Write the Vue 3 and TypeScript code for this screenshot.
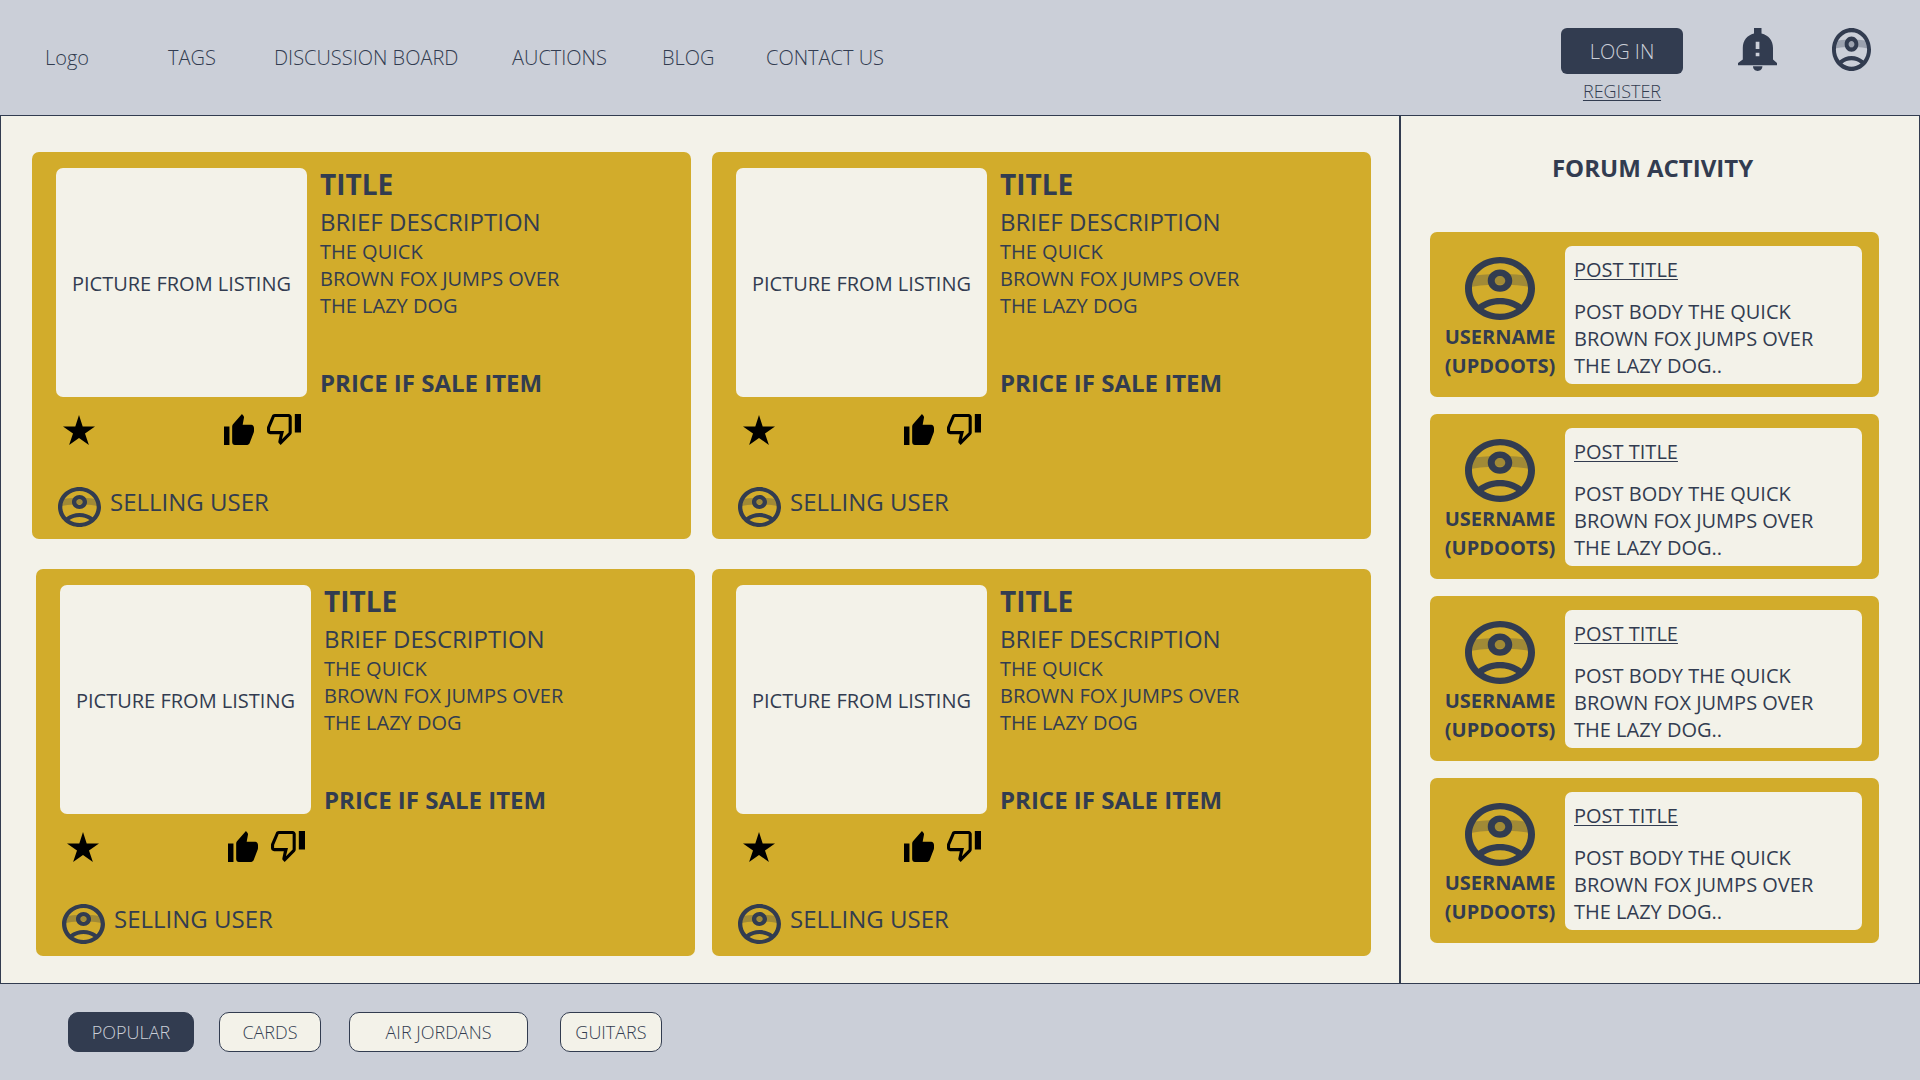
<script setup lang="ts">
import { defineComponent, h, ref } from 'vue'

interface NavItem { label: string; href: string }
interface Listing {
  id: number
  title: string
  summary: string
  lines: string[]
  price: string
  seller: string
}
interface Post { id: number; title: string; lines: string[]; user: string; votes: string }
interface Tag { label: string; size: string }

const AvatarIcon = defineComponent({
  render() {
    return h('svg', { viewBox: '2 2 20 20', preserveAspectRatio: 'none', 'aria-hidden': 'true' }, [
      h('path', {
        d: 'M3.6 8.1Q7.6 7.5 9 7.5h6Q16.4 7.5 20.4 8.1L21 11.6Q17.5 10.9 14.5 10.8h-5Q6.5 10.9 3 11.6Z',
        fill: 'currentColor',
        opacity: '0.3',
      }),
      h('path', {
        d: 'M12 2C6.48 2 2 6.48 2 12s4.48 10 10 10 10-4.48 10-10S17.52 2 12 2zM7.35 18.5C8.66 17.56 10.26 17 12 17s3.34.56 4.65 1.5c-1.31.94-2.91 1.5-4.65 1.5s-3.34-.56-4.65-1.5zm10.79-1.38C16.45 15.8 14.32 15 12 15s-4.45.8-6.14 2.12C4.7 15.73 4 13.95 4 12c0-4.42 3.58-8 8-8s8 3.58 8 8c0 1.95-.7 3.73-1.86 5.12zM12 6c-1.93 0-3.5 1.57-3.5 3.5S10.07 13 12 13s3.5-1.57 3.5-3.5S13.93 6 12 6zm0 5c-.83 0-1.5-.67-1.5-1.5S11.17 8 12 8s1.5.67 1.5 1.5S12.83 11 12 11z',
        fill: 'currentColor',
      }),
    ])
  },
})

const navItems: NavItem[] = [
  { label: 'TAGS', href: '#tags' },
  { label: 'DISCUSSION BOARD', href: '#board' },
  { label: 'AUCTIONS', href: '#auctions' },
  { label: 'BLOG', href: '#blog' },
  { label: 'CONTACT US', href: '#contact' },
]

const makeListing = (id: number): Listing => ({
  id,
  title: 'TITLE',
  summary: 'BRIEF DESCRIPTION',
  lines: ['THE QUICK', 'BROWN FOX JUMPS OVER', 'THE LAZY DOG'],
  price: 'PRICE IF SALE ITEM',
  seller: 'SELLING USER',
})

const listingRows: Listing[][] = [
  [makeListing(1), makeListing(2)],
  [makeListing(3), makeListing(4)],
]

const posts: Post[] = [1, 2, 3, 4].map((id) => ({
  id,
  title: 'POST TITLE',
  lines: ['POST BODY THE QUICK', 'BROWN FOX JUMPS OVER', 'THE LAZY DOG..'],
  user: 'USERNAME',
  votes: '(UPDOOTS)',
}))

const tags: Tag[] = [
  { label: 'POPULAR', size: 'medium' },
  { label: 'CARDS', size: 'small' },
  { label: 'AIR JORDANS', size: 'large' },
  { label: 'GUITARS', size: 'small' },
]
const activeTag = ref<string>('POPULAR')
</script>

<template>
  <div class="page">
    <header class="top">
      <a class="logo" href="#home">Logo</a>
      <nav class="nav" aria-label="Main">
        <a v-for="item in navItems" :key="item.label" :href="item.href">{{ item.label }}</a>
      </nav>
      <div class="actions">
        <div class="account">
          <button type="button" class="login">LOG IN</button>
          <a class="register" href="#register">REGISTER</a>
        </div>
        <button type="button" class="icon-button" aria-label="Notifications">
          <svg class="bell" viewBox="0 0 39 43" aria-hidden="true">
            <path
              fill="currentColor"
              fill-rule="evenodd"
              d="M16 0h7.5v5.600C30.5 7.3 35 12.5 35 20v11.5l4 3.5v2.3H0V35l4.8-3.5V20C4.8 12.5 9.2 7.3 16 5.6ZM17.7 13.7v7.3h3.7v-7.3ZM17.7 24.7v3.6h3.7v-3.6ZM15 38.3h9.4c0 2.600-2 4.7-4.7 4.7S15 40.9 15 38.3Z"
            />
          </svg>
        </button>
        <button type="button" class="icon-button" aria-label="Profile">
          <AvatarIcon class="avatar-top" />
        </button>
      </div>
    </header>

    <div class="content">
      <main class="listings">
        <div v-for="(row, r) in listingRows" :key="r" class="row">
          <article v-for="item in row" :key="item.id" class="card">
            <div class="card-main">
              <div class="picture">PICTURE FROM LISTING</div>
              <div class="details">
                <h2>{{ item.title }}</h2>
                <h3>{{ item.summary }}</h3>
                <p>
                  <span v-for="line in item.lines" :key="line">{{ line }}</span>
                </p>
                <strong>{{ item.price }}</strong>
              </div>
            </div>
            <div class="reactions">
              <button type="button" class="icon-button" aria-label="Favourite">
                <svg class="star" viewBox="0 0 32 30" aria-hidden="true">
                  <path d="M16 0l3.7 11.4H32l-10 7.1L25.9 30 16 23 6.1 30 10 18.5 0 11.4h12.3Z" />
                </svg>
              </button>
              <div class="votes">
                <button type="button" class="icon-button" aria-label="Like">
                  <svg class="up" viewBox="1 1 22 20" preserveAspectRatio="none" aria-hidden="true">
                    <path d="M1 21h4V9H1v12zm22-11c0-1.1-.9-2-2-2h-6.31l.95-4.57.03-.32c0-.41-.17-.79-.44-1.06L14.17 1 7.59 7.59C7.22 7.95 7 8.45 7 9v10c0 1.1.9 2 2 2h9c.83 0 1.54-.5 1.84-1.22l3.02-7.05c.09-.23.14-.47.14-.73v-2z" />
                  </svg>
                </button>
                <button type="button" class="icon-button" aria-label="Dislike">
                  <svg class="down" viewBox="1 3 22 20" preserveAspectRatio="none" aria-hidden="true">
                    <path d="M15 3H6c-.83 0-1.54.5-1.84 1.22l-3.02 7.05c-.09.23-.14.47-.14.73v2c0 1.1.9 2 2 2h6.31l-.95 4.57-.03.32c0 .41.17.79.44 1.06L9.83 23l6.58-6.59c.37-.36.59-.86.59-1.41V5c0-1.1-.9-2-2-2zm0 12l-4.34 4.34L12 14H3v-2l3-7h9v10zm4-12h4v12h-4V3z" />
                  </svg>
                </button>
              </div>
            </div>
            <div class="seller">
              <AvatarIcon class="avatar-seller" />
              <span>{{ item.seller }}</span>
            </div>
          </article>
        </div>
      </main>

      <aside class="forum">
        <h2 class="forum-heading">FORUM ACTIVITY</h2>
        <article v-for="post in posts" :key="post.id" class="post">
          <div class="author">
            <AvatarIcon class="avatar-post" />
            <span>{{ post.user }}</span>
            <span>{{ post.votes }}</span>
          </div>
          <div class="post-body">
            <a href="#post">{{ post.title }}</a>
            <p>
              <span v-for="line in post.lines" :key="line">{{ line }}</span>
            </p>
          </div>
        </article>
      </aside>
    </div>

    <footer class="tags">
      <button
        v-for="tag in tags"
        :key="tag.label"
        type="button"
        class="tag"
        :class="[tag.size, { active: tag.label === activeTag }]"
        @click="activeTag = tag.label"
      >
        {{ tag.label }}
      </button>
    </footer>
  </div>
</template>

<style>
body {
  margin: 0;
  background: #cbcfd8;
}
</style>

<style scoped>
.page {
  display: flex;
  flex-direction: column;
  min-height: 100vh;
  background: #cbcfd8;
  color: #323c50;
  font-family: "Open Sans", "Noto Sans", sans-serif;
  font-size: 20px;
  font-weight: 500;
  line-height: 27px;
}
h2,
h3,
p {
  margin: 0;
}
a {
  color: inherit;
  text-decoration: none;
}
button {
  font: inherit;
  color: inherit;
  cursor: pointer;
}
svg {
  display: block;
}
p span {
  display: block;
}
.icon-button {
  padding: 0;
  border: 0;
  background: none;
}

.top {
  display: flex;
  height: 115px;
  padding: 0 49px 0 45px;
  font-weight: 300;
}
.logo {
  width: 123px;
  align-self: center;
}
.nav {
  display: grid;
  grid-template-columns: 106px 238px 150px 104px auto;
  align-items: center;
  white-space: nowrap;
}
.actions {
  display: flex;
  align-items: flex-start;
  margin-left: auto;
  padding-top: 28px;
  gap: 55px;
}
.account {
  display: flex;
  flex-direction: column;
  align-items: center;
  gap: 5px;
}
.login {
  width: 122px;
  height: 46px;
  padding: 0;
  border: 0;
  border-radius: 6px;
  background: #323c50;
  color: #cbcfd8;
}
.register {
  font-size: 18px;
  line-height: 24px;
  text-decoration: underline;
  text-decoration-thickness: 1px;
  text-underline-offset: 2px;
}
.bell {
  width: 39px;
  height: 43px;
}
.avatar-top {
  width: 39px;
  height: 43px;
}

.content {
  display: grid;
  flex: 1;
  grid-template-columns: 1400fr 520fr;
}
.listings,
.forum {
  border: 1px solid #323c50;
  background: #f3f2e9;
}
.listings {
  display: flex;
  flex-direction: column;
  padding: 36px 28px 27px 31px;
  gap: 30px;
}
.row {
  display: grid;
  grid-template-columns: 1fr 1fr;
  gap: 21px;
}
.row:nth-child(even) {
  padding-left: 4px;
  gap: 17px;
}
.card {
  padding: 16px 24px 12px;
  border-radius: 7px;
  background: #d2ac2b;
}
.card-main {
  display: flex;
  gap: 13px;
}
.picture {
  display: flex;
  box-sizing: border-box;
  flex: none;
  align-items: center;
  justify-content: center;
  width: 251px;
  height: 229px;
  padding-top: 2px;
  border-radius: 7px;
  background: #f3f2e9;
  white-space: nowrap;
}
.details {
  display: flex;
  flex-direction: column;
}
.details h2 {
  font-size: 28px;
  font-weight: 700;
  line-height: 32px;
}
.details h3 {
  margin-top: 6px;
  font-size: 24px;
  font-weight: 500;
  line-height: 32px;
}
.details strong {
  margin-top: auto;
  font-size: 24px;
  font-weight: 700;
  line-height: 28px;
}
.reactions {
  display: flex;
  justify-content: space-between;
  align-items: flex-end;
  width: 238px;
  height: 31px;
  padding: 17px 6px 1px 7px;
  color: #000;
}
.votes {
  display: flex;
  gap: 13px;
}
.star {
  width: 32px;
  height: 30px;
}
.up {
  width: 30px;
  height: 31px;
}
.down {
  width: 34px;
  height: 31px;
}
.seller {
  display: flex;
  align-items: flex-start;
  margin-top: 41px;
  padding-left: 2px;
  gap: 9px;
  font-size: 24px;
  line-height: 30px;
}
.avatar-seller {
  width: 43px;
  height: 40px;
}

.forum {
  display: flex;
  flex-direction: column;
  padding: 32px 40px 40px 29px;
  gap: 17px;
}
.forum-heading {
  margin-bottom: 27px;
  padding-right: 4px;
  font-size: 24px;
  font-weight: 700;
  line-height: 40px;
  text-align: center;
}
.post {
  display: flex;
  padding: 14px 17px 13px 5px;
  border-radius: 7px;
  background: #d2ac2b;
}
.author {
  display: flex;
  flex: none;
  flex-direction: column;
  align-items: center;
  width: 130px;
  padding-top: 11px;
  font-weight: 700;
  line-height: 29px;
}
.avatar-post {
  width: 70px;
  height: 63px;
  margin-bottom: 2px;
}
.post-body {
  flex: 1;
  padding: 10px 9px 5px;
  border-radius: 7px;
  background: #f3f2e9;
}
.post-body a {
  display: block;
  text-decoration: underline;
  text-decoration-thickness: 1px;
  text-underline-offset: 2px;
}
.post-body p {
  margin-top: 15px;
}

.tags {
  display: flex;
  padding: 28px 68px;
  gap: 25px;
}
.tag {
  height: 40px;
  padding: 0;
  border: 1px solid #323c50;
  border-radius: 10px;
  background: #f3f2e9;
  font-size: 18px;
  font-weight: 300;
}
.tag.small {
  width: 102px;
}
.tag.medium {
  width: 126px;
}
.tag.large {
  width: 179px;
  margin: 0 7px 0 3px;
}
.tag.active {
  background: #323c50;
  color: #cbcfd8;
}
</style>
